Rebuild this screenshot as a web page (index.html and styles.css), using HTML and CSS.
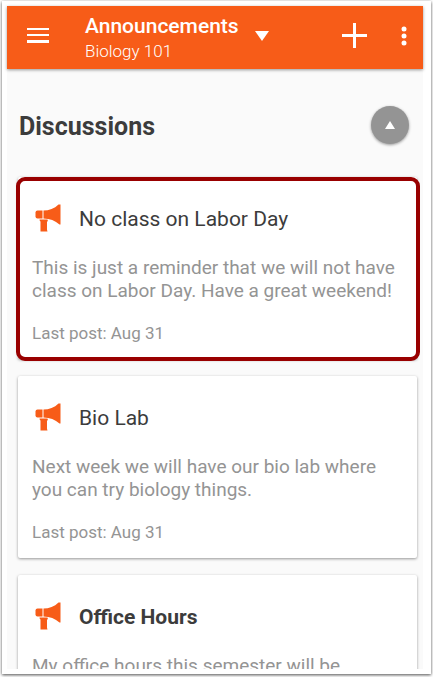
FILE: index.html
```html
<!DOCTYPE html>
<html lang="en">
<head>
  <meta charset="UTF-8">
  <meta name="viewport" content="width=device-width, initial-scale=1.0">
  <title>Announcements</title>
  <link rel="stylesheet" href="styles.css">
</head>
<body>
  <svg class="sprite" aria-hidden="true">
    <symbol id="megaphone" viewBox="0 0 26 28">
      <path d="M2.500 6.500H7.500V14.500H2.500Q0.500 14.500 0.500 12.500V8.500Q0.500 6.500 2.500 6.500Z"/>
      <path d="M8.500 6.500C14 6.500 19.500 4.500 23.500 0.500H25.500V20.500H24.500C20 16.500 15 14.500 8.500 14.500Z"/>
      <path d="M4.500 15.500H12.500Q13.500 16.500 12 18V25.500Q12 26 12.500 27.500H5.500V17.500Q4.500 17 4.500 15.500Z"/>
    </symbol>
  </svg>

  <div class="screen">
    <header class="header">
      <button class="icon-button menu-button" aria-label="Menu">
        <svg width="22" height="15"><path d="M0 0h22v2H0zM0 6h22v2H0zM0 12h22v3H0z"/></svg>
      </button>
      <div class="header-titles">
        <h1 class="header-title">Announcements</h1>
        <p class="header-course">Biology 101</p>
      </div>
      <button class="icon-button" aria-label="Switch tool">
        <svg width="14" height="10"><path d="M0 0h14L7 10z"/></svg>
      </button>
      <button class="icon-button add-button" aria-label="Add">
        <svg width="25" height="25"><path d="M11 0h3v11h11v3H14v11h-3V14H0v-3h11z"/></svg>
      </button>
      <button class="icon-button" aria-label="More options">
        <svg width="6" height="20"><circle cx="3" cy="3" r="2.500"/><circle cx="3" cy="10" r="2.500"/><circle cx="3" cy="17" r="2.500"/></svg>
      </button>
    </header>

    <main class="content">
      <div class="section-header">
        <h2 class="section-title">Discussions</h2>
        <button class="collapse-button" aria-label="Collapse">
          <svg width="10" height="8"><path d="M5 0l5 8H0z"/></svg>
        </button>
      </div>

      <div class="card-list">
        <article class="card card--selected">
          <div class="card-header">
            <svg class="card-icon"><use href="#megaphone"/></svg>
            <h3 class="card-title">No class on Labor Day</h3>
          </div>
          <p class="card-text">This is just a reminder that we will not have class on Labor Day. Have a great weekend!</p>
          <p class="card-date">Last post: Aug 31</p>
        </article>

        <article class="card">
          <div class="card-header">
            <svg class="card-icon"><use href="#megaphone"/></svg>
            <h3 class="card-title">Bio Lab</h3>
          </div>
          <p class="card-text">Next week we will have our bio lab where you can try biology things.</p>
          <p class="card-date">Last post: Aug 31</p>
        </article>

        <article class="card">
          <div class="card-header">
            <svg class="card-icon"><use href="#megaphone"/></svg>
            <h3 class="card-title card-title--unread">Office Hours</h3>
          </div>
          <p class="card-text">My office hours this semester will be</p>
        </article>
      </div>
    </main>
  </div>
</body>
</html>
```
FILE: styles.css
```css
* {
  box-sizing: border-box;
}
body {
  font-family: Roboto, sans-serif;
  margin: 0;
  padding: 1px 2px 3px;
  height: 100vh;
  display: flex;
  background: #fff;
}
h1, h2, h3, p {
  margin: 0;
}
button {
  border: none;
  padding: 0;
  cursor: pointer;
}
.sprite {
  display: none;
}
.screen {
  flex: 1;
  min-width: 0;
  display: flex;
  flex-direction: column;
  border: 5px solid #fff;
  border-right-width: 8px;
  background: #fafafa;
  box-shadow: 0 1px 3px rgba(0, 0, 0, 0.7);
}

/* Header */
.header {
  flex: none;
  display: flex;
  align-items: center;
  height: 63px;
  padding: 0 16px 4px 20px;
  background: #f75c18;
  color: #fff;
  box-shadow: 0 1px 3px rgba(0, 0, 0, 0.4);
  position: relative;
}
.icon-button {
  display: flex;
  background: none;
  fill: #fff;
}
.menu-button {
  margin-right: 36px;
}
.header-titles {
  margin-right: 16px;
  padding-top: 4px;
}
.header-title {
  font-size: 21px;
  line-height: 26px;
  font-weight: 500;
}
.header-course {
  font-size: 17px;
  line-height: 24px;
  font-weight: 300;
}
.add-button {
  margin-left: auto;
  margin-right: 34px;
}

/* Discussions */
.content {
  flex: 1;
  min-height: 0;
  overflow: hidden;
}
.section-header {
  display: flex;
  align-items: center;
  justify-content: space-between;
  padding: 37px 14px 33px 12px;
}
.section-title {
  padding-top: 4px;
  font-size: 25px;
  line-height: 30px;
  font-weight: 700;
  color: #3c3c3c;
}
.collapse-button {
  display: flex;
  align-items: center;
  justify-content: center;
  width: 38px;
  height: 38px;
  border-radius: 50%;
  background: #949494;
  fill: #fff;
  box-shadow: 0 1px 3px rgba(0, 0, 0, 0.4);
}
.card-list {
  display: flex;
  flex-direction: column;
  gap: 17px;
  padding: 0 6px 17px 11px;
}
.card {
  position: relative;
  padding: 24px 14px 16px;
  border-radius: 2px;
  background: #fff;
  box-shadow: 0 1px 3px rgba(0, 0, 0, 0.4);
}
.card--selected::after {
  content: "";
  position: absolute;
  inset: 0 -3px -2px -2px;
  border: 4px solid #990000;
  border-radius: 9px;
}
.card-header {
  display: flex;
  align-items: center;
  height: 36px;
  margin-bottom: 19px;
}
.card-icon {
  width: 26px;
  height: 28px;
  margin: 0 18px 2px 3px;
  fill: #f75c18;
}
.card-title {
  font-size: 21px;
  line-height: 28px;
  font-weight: 400;
  color: #3c3c3c;
}
.card-title--unread {
  font-weight: 700;
}
.card-text {
  font-size: 19px;
  line-height: 23px;
  color: #949494;
}
.card-date {
  margin-top: 21px;
  font-size: 17px;
  line-height: 20px;
  color: #949494;
}
```
